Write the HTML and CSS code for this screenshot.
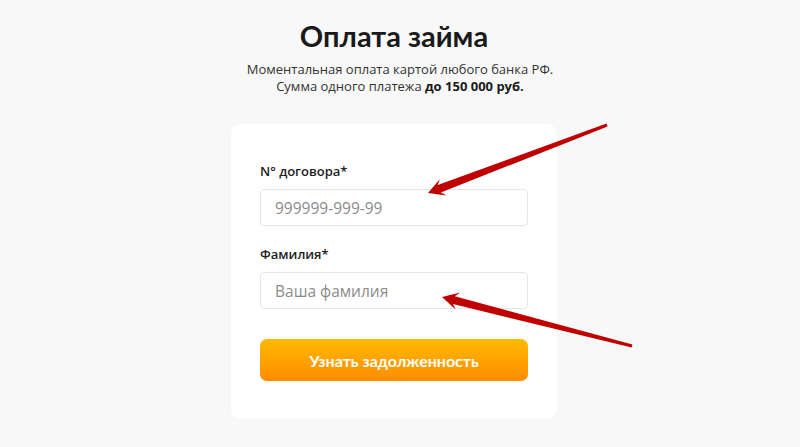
FILE: index.html
```html
<!DOCTYPE html>
<html lang="ru">
<head>
<meta charset="utf-8">
<link rel="stylesheet" href="styles.css">
</head>
<body>
<main class="page">
  <h1 class="title">Оплата займа</h1>
  <p class="subtitle">Моментальная оплата картой любого банка РФ.<br>Сумма одного платежа <b>до 150 000 руб.</b></p>
  <form class="card">
    <label class="label">N° договора*</label>
    <input class="field" type="text" placeholder="999999-999-99">
    <label class="label label-second">Фамилия*</label>
    <input class="field" type="text" placeholder="Ваша фамилия">
    <button class="btn" type="button">Узнать задолженность</button>
  </form>
</main>
<svg class="arrows" width="800" height="447" viewBox="0 0 800 447">
  <polygon fill="#c00000" points="428,193 446.5,195.6 440.8,192.6 607.5,126.4 606.5,123.6 437.8,184.9 439.8,179.2"/>
  <polygon fill="#c00000" points="442,297 455.6,309.6 453,304 631.6,347.5 632.4,344.5 454.8,296.2 460.2,292.5"/>
</svg>
</body>
</html>
```
FILE: styles.css
```css
html, body {
  margin: 0;
  padding: 0;
}
body {
  background: #f8f8f8;
  font-family: "Lato", "Liberation Sans", sans-serif;
  color: #1a1a1a;
  width: 800px;
  height: 447px;
  overflow: hidden;
  position: relative;
}
.page {
  display: flex;
  flex-direction: column;
  align-items: center;
  padding-top: 18px;
  padding-right: 12px;
}
.title {
  margin: 0;
  font-size: 29px;
  font-weight: 700;
  line-height: 36px;
  color: #1a1a1a;
}
.subtitle {
  margin: 7px 0 0 12px;
  text-align: center;
  font-family: "Open Sans", "Liberation Sans", sans-serif;
  font-size: 13px;
  line-height: 17px;
  color: #333;
}
.subtitle b {
  font-weight: 700;
  color: #1a1a1a;
}
.card {
  margin-top: 29px;
  width: 326px;
  box-sizing: border-box;
  background: #fff;
  border-radius: 10px;
  padding: 38px 29px 38px;
  display: flex;
  flex-direction: column;
}
.label {
  font-family: "Open Sans", "Liberation Sans", sans-serif;
  font-size: 13px;
  font-weight: 600;
  line-height: 18px;
  color: #222;
  margin-bottom: 9px;
}
.label-second {
  margin-top: 19px;
}
.field {
  height: 37px;
  box-sizing: border-box;
  border: 1px solid #e6e6e6;
  border-radius: 4px;
  padding: 0 14px;
  font-family: "Open Sans", "Liberation Sans", sans-serif;
  font-size: 15.5px;
  color: #333;
  background: #fff;
  outline: none;
}
.field::placeholder {
  color: #8c8c8c;
}
.btn {
  margin-top: 30px;
  height: 42px;
  border: none;
  border-radius: 7px;
  background: linear-gradient(180deg, #ffba00 0%, #ff8c00 100%);
  color: #fff;
  font-family: inherit;
  font-size: 16px;
  font-weight: 700;
  cursor: pointer;
}
.arrows {
  position: absolute;
  left: 0;
  top: 0;
  pointer-events: none;
}
```
